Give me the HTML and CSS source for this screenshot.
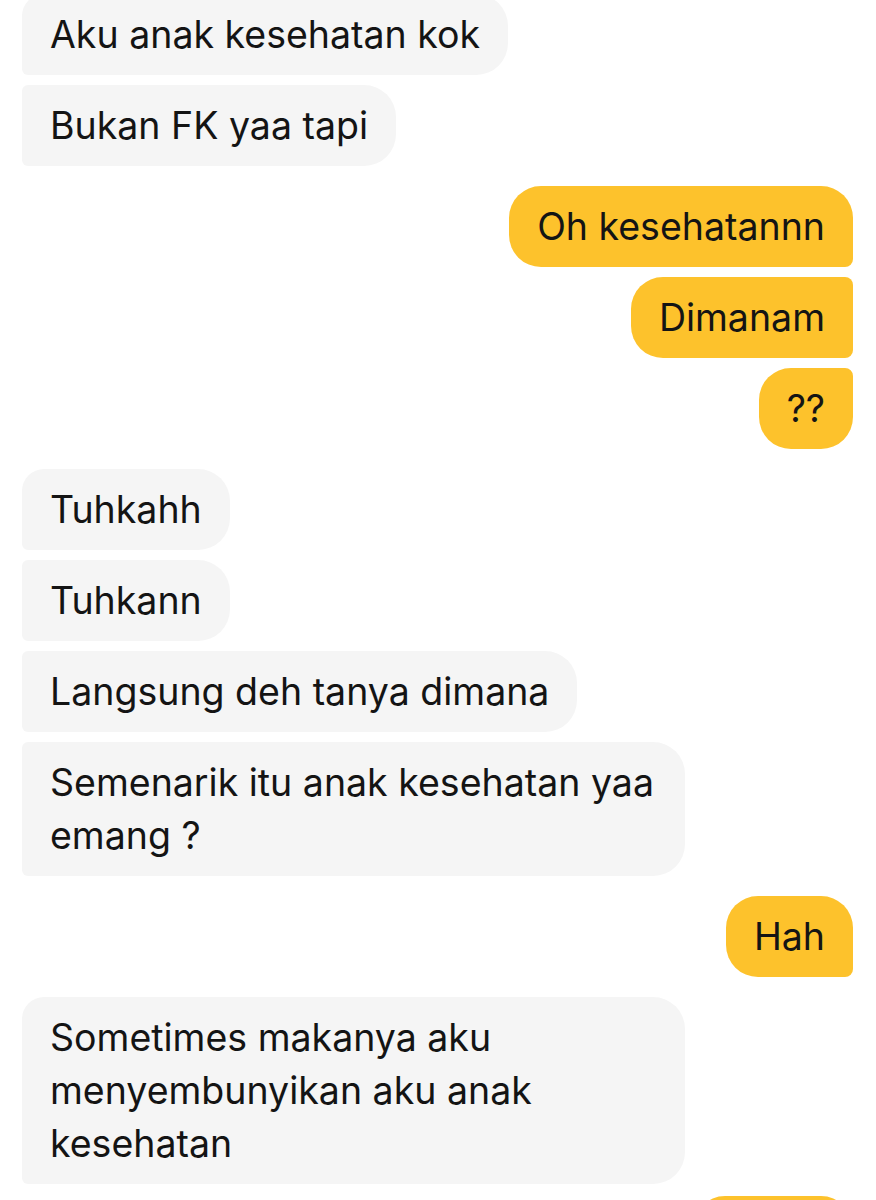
FILE: index.html
```html
<!DOCTYPE html>
<html lang="en">
<head>
    <meta charset="UTF-8">
    <meta name="viewport" content="width=device-width, initial-scale=1.0">
    <title>Chat</title>
    <link rel="stylesheet" href="styles.css">
</head>
<body>
    <div class="chat">
        <div class="group them">
            <div class="bubble">Aku anak kesehatan kok</div>
            <div class="bubble">Bukan FK yaa tapi</div>
        </div>
        <div class="group me">
            <div class="bubble">Oh kesehatannn</div>
            <div class="bubble">Dimanam</div>
            <div class="bubble">??</div>
        </div>
        <div class="group them">
            <div class="bubble">Tuhkahh</div>
            <div class="bubble">Tuhkann</div>
            <div class="bubble">Langsung deh tanya dimana</div>
            <div class="bubble wide">Semenarik itu anak kesehatan yaa emang ?</div>
        </div>
        <div class="group me">
            <div class="bubble">Hah</div>
        </div>
        <div class="group them">
            <div class="bubble wide">Sometimes makanya aku menyembunyikan aku anak kesehatan</div>
        </div>
        <div class="group me next">
            <div class="bubble empty"></div>
        </div>
    </div>
</body>
</html>
```

FILE: styles.css
```css
* {
    margin: 0;
    padding: 0;
    box-sizing: border-box;
}

body {
    background: #ffffff;
    font-family: Inter, 'Noto Sans', sans-serif;
    color: #141414;
    overflow: hidden;
}

.chat {
    display: flex;
    flex-direction: column;
    gap: 20px;
    padding: 0 23px 0 22px;
    margin-top: -6px;
}

.group {
    display: flex;
    flex-direction: column;
    gap: 10px;
}

.group.them {
    align-items: flex-start;
}

.group.me {
    align-items: flex-end;
}

.group.next {
    margin-top: -8px;
}

.bubble {
    font-size: 37.5px;
    line-height: 53px;
    padding: 14px 28px;
    max-width: 663px;
}

.them .bubble {
    background: #f5f5f5;
    border-radius: 6px 32px 32px 6px;
}

.them .bubble:first-child {
    border-top-left-radius: 22px;
}

.me .bubble {
    background: #fdc22c;
    border-radius: 32px 8px 8px 32px;
}

.me .bubble:first-child {
    border-top-right-radius: 32px;
}

.me .bubble:last-child:not(:first-child) {
    border-bottom-right-radius: 32px;
}

.bubble.wide {
    width: 663px;
}

.bubble.empty {
    width: 160px;
    height: 80px;
}
```
